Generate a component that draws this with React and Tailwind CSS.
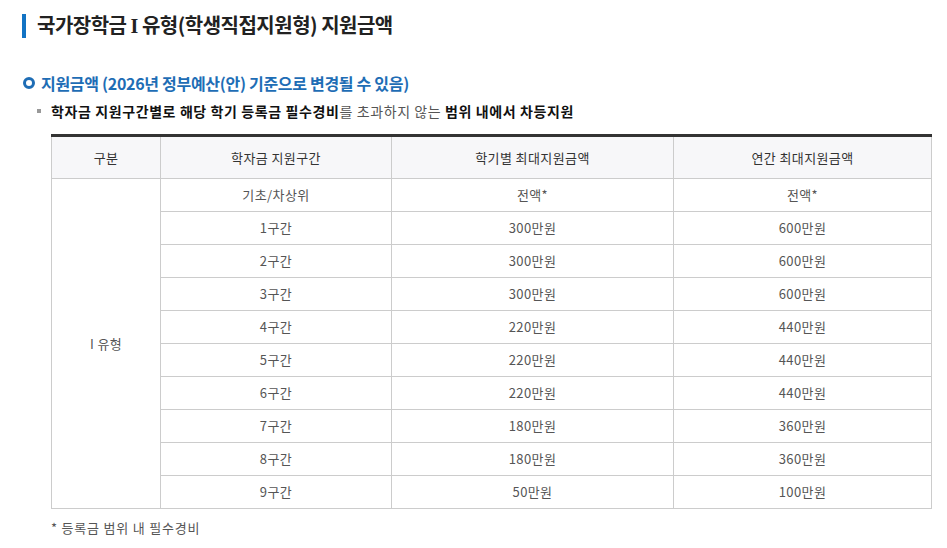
import React from 'react';

const rows = [
	['기초/차상위', '전액*', '전액*'],
	['1구간', '300만원', '600만원'],
	['2구간', '300만원', '600만원'],
	['3구간', '300만원', '600만원'],
	['4구간', '220만원', '440만원'],
	['5구간', '220만원', '440만원'],
	['6구간', '220만원', '440만원'],
	['7구간', '180만원', '360만원'],
	['8구간', '180만원', '360만원'],
	['9구간', '50만원', '100만원'],
];

const App = () => {
	return (
		<div className="w-[947px] h-[548px] bg-white font-['Noto_Sans_CJK_KR','Noto_Sans',sans-serif] overflow-hidden">
			<div className="pt-[13px] pl-[22px] flex items-center">
				<div className="w-[4px] h-[24px] bg-[#1273c4]" />
				<h2 className="ml-[11px] text-[20px] font-bold text-[#222] leading-[24px] tracking-[-0.5px]">
					국가장학금 <span className="font-['Liberation_Serif',serif]">I</span> 유형(학생직접지원형) 지원금액
				</h2>
			</div>

			<div className="mt-[35px] pl-[23px] flex items-center">
				<span className="w-[12px] h-[12px] rounded-full border-[3px] border-[#1e6db5]" />
				<h3 className="ml-[6px] text-[16px] font-bold text-[#1e6db5] leading-[20px] tracking-[-0.3px]">
					지원금액 (2026년 정부예산(안) 기준으로 변경될 수 있음)
				</h3>
			</div>

			<div className="mt-[9px] pl-[37px] flex items-center">
				<span className="w-[4px] h-[4px] bg-[#999]" />
				<p className="ml-[10px] text-[14px] text-[#555] leading-[18px] tracking-[0.6px]">
					<b className="text-[#111]">학자금 지원구간별로 해당 학기 등록금 필수경비</b>를 초과하지 않는 <b className="text-[#111]">범위 내에서 차등지원</b>
				</p>
			</div>

			<div className="mt-[14px] ml-[51px] w-[880px]">
				<table className="w-full border-collapse table-fixed text-[13px] tracking-[0.4px]">
					<colgroup>
						<col className="w-[109px]" />
						<col className="w-[231px]" />
						<col className="w-[282px]" />
						<col className="w-[258px]" />
					</colgroup>
					<thead>
						<tr className="h-[43px] bg-[#f7f7f9] text-[#333]">
							<th className="font-normal border border-[#ccc] border-t-[#333] border-t-[3px]">구분</th>
							<th className="font-normal border border-[#ccc] border-t-[#333] border-t-[3px]">학자금 지원구간</th>
							<th className="font-normal border border-[#ccc] border-t-[#333] border-t-[3px]">학기별 최대지원금액</th>
							<th className="font-normal border border-[#ccc] border-t-[#333] border-t-[3px]">연간 최대지원금액</th>
						</tr>
					</thead>
					<tbody className="text-[#555]">
						{rows.map((r, i) => (
							<tr key={i} className="h-[33px]">
								{i === 0 && (
									<td rowSpan={rows.length} className="border border-[#ccc] text-center">I 유형</td>
								)}
								<td className="border border-[#ccc] text-center">{r[0]}</td>
								<td className="border border-[#ccc] text-center">{r[1]}</td>
								<td className="border border-[#ccc] text-center">{r[2]}</td>
							</tr>
						))}
					</tbody>
				</table>
			</div>

			<p className="mt-[9px] ml-[51px] text-[13px] text-[#555] tracking-[0.8px]">* 등록금 범위 내 필수경비</p>
		</div>
	);
};

export default App;
